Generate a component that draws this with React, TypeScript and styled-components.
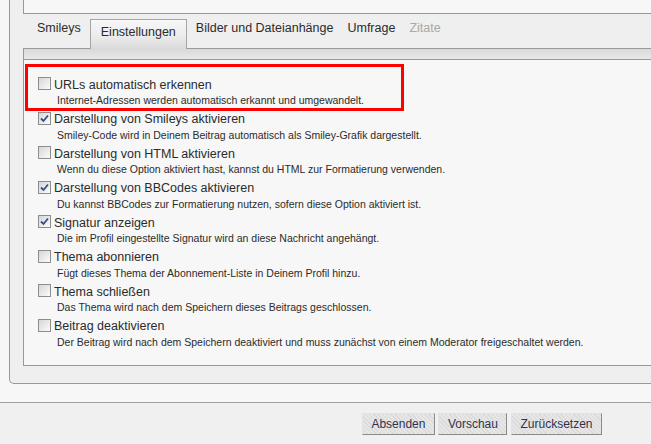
import styled, { createGlobalStyle } from 'styled-components'

const GlobalStyle = createGlobalStyle`
  html, body {
    margin: 0;
    padding: 0;
    background: #f0f0f0;
    overflow: hidden;
  }
  body {
    font-family: "Liberation Sans", Arial, sans-serif;
    color: #333;
  }
`

const options = [
  {
    label: 'URLs automatisch erkennen',
    desc: 'Internet-Adressen werden automatisch erkannt und umgewandelt.',
    checked: false,
    highlight: true,
  },
  {
    label: 'Darstellung von Smileys aktivieren',
    desc: 'Smiley-Code wird in Deinem Beitrag automatisch als Smiley-Grafik dargestellt.',
    checked: true,
  },
  {
    label: 'Darstellung von HTML aktivieren',
    desc: 'Wenn du diese Option aktiviert hast, kannst du HTML zur Formatierung verwenden.',
    checked: false,
  },
  {
    label: 'Darstellung von BBCodes aktivieren',
    desc: 'Du kannst BBCodes zur Formatierung nutzen, sofern diese Option aktiviert ist.',
    checked: true,
  },
  {
    label: 'Signatur anzeigen',
    desc: 'Die im Profil eingestellte Signatur wird an diese Nachricht angehängt.',
    checked: true,
  },
  {
    label: 'Thema abonnieren',
    desc: 'Fügt dieses Thema der Abonnement-Liste in Deinem Profil hinzu.',
    checked: false,
  },
  {
    label: 'Thema schließen',
    desc: 'Das Thema wird nach dem Speichern dieses Beitrags geschlossen.',
    checked: false,
  },
  {
    label: 'Beitrag deaktivieren',
    desc: 'Der Beitrag wird nach dem Speichern deaktiviert und muss zunächst von einem Moderator freigeschaltet werden.',
    checked: false,
  },
]

const tabs = [
  { name: 'Smileys' },
  { name: 'Einstellungen', active: true },
  { name: 'Bilder und Dateianhänge' },
  { name: 'Umfrage' },
  { name: 'Zitate', disabled: true },
]

export default function App() {
  return (
    <>
      <GlobalStyle />
      <Page>
        <FormArea>
          <Fieldset>
            <EditorBottom />
            <TabBar>
              {tabs.map((tab) => (
                <Tab key={tab.name} $active={tab.active} $disabled={tab.disabled}>
                  {tab.name}
                </Tab>
              ))}
            </TabBar>
            <TabStrip />
            <OptionPanel>
              {options.map((opt) => (
                <Option key={opt.label} $highlight={opt.highlight}>
                  <OptionLabel>
                    <Checkbox $checked={opt.checked}>
                      {opt.checked && (
                        <svg width="9" height="9" viewBox="0 0 9 9">
                          <path d="M1 4.5 L3.5 7 L8 1.5" fill="none" stroke="#3b4c86" strokeWidth="1.8" />
                        </svg>
                      )}
                    </Checkbox>
                    {opt.label}
                  </OptionLabel>
                  <OptionDesc>{opt.desc}</OptionDesc>
                </Option>
              ))}
            </OptionPanel>
          </Fieldset>
        </FormArea>
        <Footer>
          <Button>Absenden</Button>
          <Button>Vorschau</Button>
          <Button>Zurücksetzen</Button>
        </Footer>
      </Page>
    </>
  )
}

const Page = styled.div`
  width: 651px;
  height: 444px;
  overflow: hidden;
`

const FormArea = styled.div`
  background: #f7f7f7;
  padding: 0 0 18px 9px;
  border-bottom: 1px solid #a0a0a0;
`

const Fieldset = styled.div`
  margin-right: -40px;
  background: #efefef;
  border: 1px solid #999;
  border-top: none;
  border-right: none;
  border-bottom-left-radius: 5px;
  padding: 0 0 17px 13px;
`

const EditorBottom = styled.div`
  height: 13px;
  background: #f7f7f7;
  border-left: 1px solid #999;
  border-bottom: 1px solid #999;
`

const TabBar = styled.div`
  display: flex;
  align-items: flex-end;
  height: 34px;
  padding-left: 7px;
`

const Tab = styled.div<{ $active?: boolean; $disabled?: boolean }>`
  height: 29px;
  box-sizing: border-box;
  font-size: 12.5px;
  line-height: 15px;
  white-space: nowrap;
  color: ${(p) => (p.$disabled ? '#a8a8a8' : '#2b2b2b')};
  padding: ${(p) => (p.$active ? '5px 10px 0' : '2px 7px 0')};
  margin: ${(p) => (p.$active ? '0 2px -1px' : '0')};
  ${(p) =>
    p.$active &&
    `
    height: 30px;
    border: 1px solid #a5a5a5;
    border-bottom: none;
    background: linear-gradient(#f7f7f7, #ececec 55%, #dadada);
    position: relative;
    z-index: 1;
  `}
`

const TabStrip = styled.div`
  height: 10px;
  border-top: 1px solid #999;
  border-bottom: 1px solid #999;
  border-left: 1px solid #999;
  background: linear-gradient(#d9d9d9, #e9e9e9);
`

const OptionPanel = styled.div`
  background: #f7f7f7;
  border-left: 1px solid #999;
  border-bottom: 1px solid #999;
  padding: 16px 0 13px 14px;
`

const Option = styled.div<{ $highlight?: boolean }>`
  position: relative;
  height: 34.5px;
  ${(p) =>
    p.$highlight &&
    `
    &::after {
      content: '';
      position: absolute;
      left: -13px;
      top: -12px;
      width: 373px;
      height: 41px;
      border: 3px solid #ff0000;
      pointer-events: none;
    }
  `}
`

const OptionLabel = styled.div`
  display: flex;
  align-items: center;
  gap: 3px;
  height: 17px;
  font-size: 12.5px;
  color: #2b2b2b;
  white-space: nowrap;
`

const Checkbox = styled.span<{ $checked?: boolean }>`
  width: 11px;
  height: 11px;
  border: 1px solid #8d8d8d;
  background: linear-gradient(135deg, #d6d6d6, #f4f4f4 80%, #fff);
  display: flex;
  align-items: center;
  justify-content: center;
  flex-shrink: 0;
  margin-top: -2px;
`

const OptionDesc = styled.div`
  padding-left: 19px;
  font-size: 10.5px;
  line-height: 14px;
  color: #2b2b2b;
  white-space: nowrap;
`

const Footer = styled.div`
  display: flex;
  justify-content: flex-end;
  gap: 3.5px;
  padding: 10px 49px 0 0;
`

const Button = styled.button`
  height: 22px;
  padding: 0 8.5px;
  font-family: "Liberation Sans", Arial, sans-serif;
  font-size: 12px;
  color: #2e3350;
  border: 1px solid;
  border-color: #e2e2e2 #8a8a8a #8a8a8a #e2e2e2;
  background: repeating-linear-gradient(
    45deg,
    #dadada 0px,
    #dadada 1px,
    #e6e6e6 1px,
    #e6e6e6 3px
  );
`
